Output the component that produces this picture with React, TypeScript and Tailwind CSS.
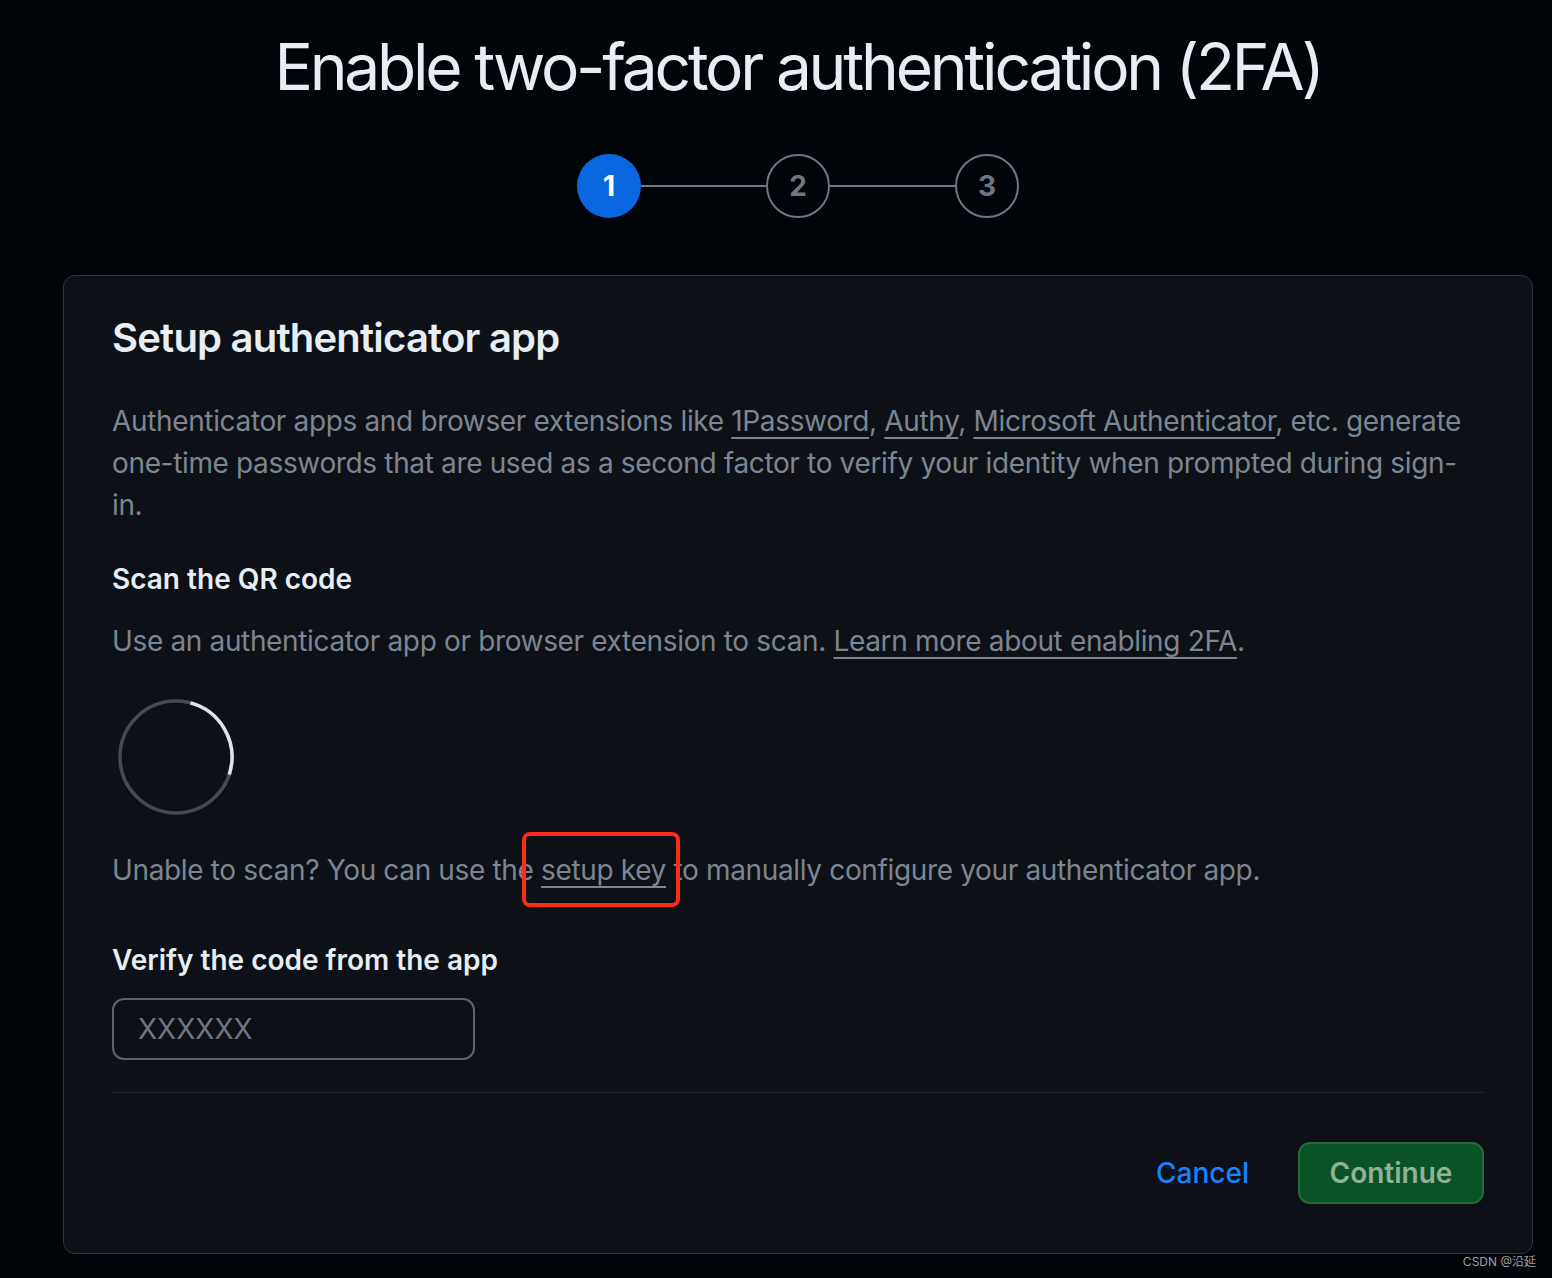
import React from "react";

const FONT = { fontFamily: "Inter, 'Noto Sans', 'Noto Sans CJK SC', sans-serif" };

// Stepper circle: active one is filled blue, the rest outlined.
function Step({ n, active }: { n: number; active?: boolean }) {
  return (
    <div
      className={
        active
          ? "flex h-[64px] w-[64px] items-center justify-center rounded-full bg-[#0b67e0] text-[28px] font-bold text-white"
          : "flex h-[64px] w-[64px] items-center justify-center rounded-full border-2 border-[#6e7681] text-[28px] font-bold text-[#6e7681]"
      }
    >
      {n}
    </div>
  );
}

function Spinner() {
  return (
    <svg width="128" height="128" viewBox="0 0 128 128" className="block">
      <circle cx="64" cy="64" r="56" fill="none" stroke="#464b52" strokeWidth="3.5" />
      <circle
        cx="64"
        cy="64"
        r="56"
        fill="none"
        stroke="#dfe4ea"
        strokeWidth="3.5"
        strokeDasharray="91 352"
        transform="rotate(-75 64 64)"
      />
    </svg>
  );
}

function Link({ children }: { children: React.ReactNode }) {
  return <a className="underline decoration-[2px] underline-offset-[6px]">{children}</a>;
}

export default function App() {
  return (
    <div className="min-h-[1278px] w-full bg-[#010409] pl-[63px]" style={FONT}>
      <div className="w-[1470px]">
        <h1 className="pt-[27px] text-center text-[64px] font-normal leading-[80px] tracking-[-0.05em] text-[#e6edf3]">
          Enable two-factor authentication (2FA)
        </h1>

        <div className="mt-[47px] flex items-center justify-center">
          <Step n={1} active />
          <div className="h-[2px] w-[125px] bg-[#6e7681]" />
          <Step n={2} />
          <div className="h-[2px] w-[125px] bg-[#6e7681]" />
          <Step n={3} />
        </div>

        <div className="mt-[57px] rounded-[12px] border border-[#30363d] bg-[#0d1117] px-[48px] pb-[49px] pt-[38px]">
          <h2 className="text-[40px] font-semibold leading-[48px] tracking-[-0.02em] text-[#e6edf3]">
            Setup authenticator app
          </h2>

          <p className="mt-[38px] whitespace-nowrap text-[28px] leading-[42px] tracking-[-0.0125em] text-[#7d8590]">
            Authenticator apps and browser extensions like <Link>1Password</Link>, <Link>Authy</Link>,{" "}
            <Link>Microsoft Authenticator</Link>, etc. generate
            <br />
            one-time passwords that are used as a second factor to verify your identity when prompted during sign-
            <br />
            in.
          </p>

          <h3 className="mt-[32px] text-[28px] font-semibold leading-[42px] text-[#e6edf3]">Scan the QR code</h3>
          <p className="mt-[20px] text-[28px] leading-[42px] tracking-[-0.0125em] text-[#7d8590]">
            Use an authenticator app or browser extension to scan. <Link>Learn more about enabling 2FA</Link>.
          </p>

          <div className="mt-[31px]">
            <Spinner />
          </div>

          <p className="mt-[28px] text-[28px] leading-[42px] tracking-[-0.0125em] text-[#7d8590]">
            Unable to scan? You can use the{" "}
            <span className="relative inline-block">
              <Link>setup key</Link>
              {/* red annotation box drawn over the screenshot */}
              <span className="pointer-events-none absolute bottom-[-16px] left-[-19px] right-[-14px] top-[-17px] rounded-[8px] border-[4px] border-[#ff2a1a]" />
            </span>{" "}
            to manually configure your authenticator app.
          </p>

          <h3 className="mt-[48px] text-[28px] font-semibold leading-[42px] text-[#e6edf3]">
            Verify the code from the app
          </h3>
          <input
            placeholder="XXXXXX"
            className="mt-[17px] block h-[62px] w-[363px] rounded-[12px] border-2 border-[#5d646d] bg-transparent pl-[24px] text-[28px] text-[#e6edf3] outline-none placeholder:text-[#6e7681]"
          />

          <div className="mt-[32px] h-px bg-[#21262d]" />

          <div className="mt-[49px] flex items-center justify-end">
            <button className="mr-[49px] text-[28px] font-medium text-[#1683ff]">Cancel</button>
            <button className="h-[62px] w-[186px] rounded-[12px] border-2 border-[#2a6936] bg-[#0a5228] text-[28px] font-semibold text-[#8fb396]">
              Continue
            </button>
          </div>
        </div>
      </div>
      <div className="flex justify-end pr-[16px] text-[12px] leading-[16px] text-[#9aa0a6]">CSDN @沿延</div>
    </div>
  );
}
